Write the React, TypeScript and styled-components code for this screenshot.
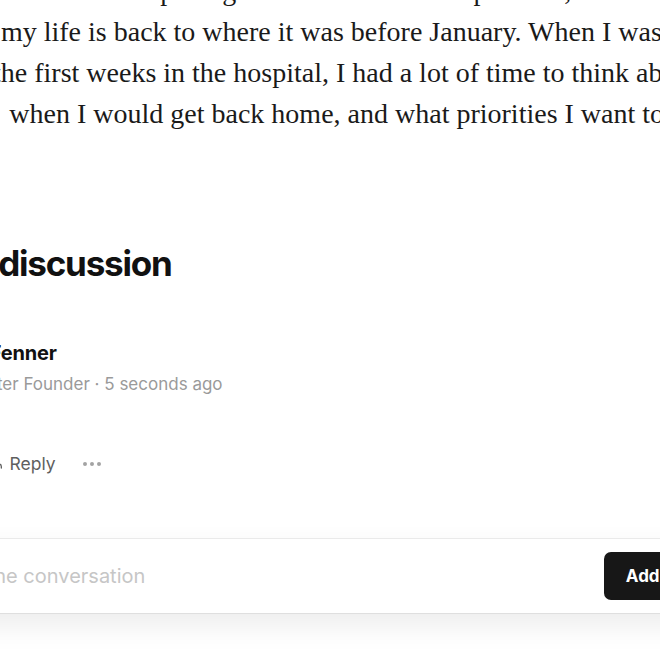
import { Ellipsis, Heart, Reply } from "lucide-react";
import styled, { createGlobalStyle } from "styled-components";

const GlobalStyle = createGlobalStyle`
  html, body {
    margin: 0;
    padding: 0;
    background: #fff;
  }

  body {
    width: 660px;
    height: 660px;
    overflow: hidden;
  }
`;

const Page = styled.div`
  width: 660px;
  height: 660px;
  overflow: hidden;
`;

const Article = styled.article`
  margin: -30px 0 0 -7px;
  font-family: "Liberation Serif", "Times New Roman", serif;
  font-size: 28px;
  line-height: 41px;
  color: #1a1a1a;
  white-space: nowrap;
`;

const Paragraph = styled.p`
  margin: 0;
`;

const Comments = styled.section`
  width: 918px;
  margin: 108px 0 0 -141px;
  font-family: Inter, "Noto Sans", sans-serif;
  color: #111;
`;

const Title = styled.h2`
  margin: 0 0 0 -3px;
  font-size: 35px;
  line-height: 42px;
  font-weight: 700;
  letter-spacing: -0.035em;
`;

const Comment = styled.div`
  display: flex;
  gap: 14px;
  margin-top: 56px;
`;

const Avatar = styled.div<{ $bg: string }>`
  flex: none;
  width: 48px;
  height: 48px;
  border-radius: 50%;
  background: ${(p) => p.$bg};
`;

const Body = styled.div`
  display: flex;
  flex-direction: column;
`;

const Name = styled.div`
  font-size: 20px;
  line-height: 26px;
  font-weight: 700;
  letter-spacing: -0.01em;
`;

const Meta = styled.div`
  margin-top: 6px;
  font-size: 17px;
  line-height: 24px;
  color: #9a9a9a;
`;

const Text = styled.p`
  margin: 12px 0 0;
  font-size: 17px;
  line-height: 28px;
`;

const Actions = styled.div`
  display: flex;
  align-items: center;
  margin-top: 16px;
`;

const ActionButton = styled.button<{ $gap?: number }>`
  display: flex;
  align-items: center;
  gap: 6px;
  margin-right: ${(p) => p.$gap ?? 0}px;
  padding: 0;
  border: 0;
  background: none;
  font-family: inherit;
  font-size: 17.5px;
  line-height: 24px;
  color: #5f5f5f;
`;

const MoreButton = styled.button`
  display: flex;
  padding: 0;
  border: 0;
  background: none;
  color: #a3a3a3;
`;

const Form = styled.form`
  display: flex;
  align-items: center;
  gap: 14px;
  margin-top: 63px;
  padding: 13px 13px 13px 21px;
  border-radius: 8px;
  background: #fff;
  box-shadow: 0 0 0 1px rgba(0, 0, 0, 0.07), 0 12px 30px rgba(0, 0, 0, 0.08);
`;

const Input = styled.input`
  flex: 1;
  min-width: 0;
  padding: 0;
  border: 0;
  outline: none;
  font-family: Inter, "Noto Sans", sans-serif;
  font-size: 20px;
  line-height: 28px;
  color: #15171a;

  &::placeholder {
    color: #c6c6c6;
  }
`;

const SubmitButton = styled.button`
  flex: none;
  height: 48px;
  padding: 0 22px;
  border: 0;
  border-radius: 7px;
  background: #171717;
  font-family: Inter, "Noto Sans", sans-serif;
  font-size: 17px;
  font-weight: 700;
  color: #fff;
`;

export default function App() {
  return (
    <Page>
      <GlobalStyle />
      <Article>
        <Paragraph>
          e at home. I hope to get back to work in September, but for now
          <br />
          {"\u2009\u200amy life is back to where it was before January. When I was in"}
          <br />
          the first weeks in the hospital, I had a lot of time to think about
          <br />
          {"\u2002\u200awhen I would get back home, and what priorities I want to set"}
        </Paragraph>
      </Article>

      <Comments>
        <Title>Member discussion</Title>

        <Comment>
          <Avatar $bg="#c9b7a4" />
          <Body>
            <Name>Robert Fenner</Name>
            <Meta>Broadcaster Founder · 5 seconds ago</Meta>
            <Text>Great!</Text>
            <Actions>
              <ActionButton $gap={11}>
                <Heart size={16} strokeWidth={2} />
                Like
              </ActionButton>
              <ActionButton $gap={24}>
                <Reply size={16} strokeWidth={2} />
                Reply
              </ActionButton>
              <MoreButton type="button">
                <Ellipsis size={24} strokeWidth={2} />
              </MoreButton>
            </Actions>
          </Body>
        </Comment>

        <Form onSubmit={(e) => e.preventDefault()}>
          <Avatar $bg="#c9b7a4" />
          <Input placeholder="Join the conversation" />
          <SubmitButton type="submit">Add comment</SubmitButton>
        </Form>
      </Comments>
    </Page>
  );
}
